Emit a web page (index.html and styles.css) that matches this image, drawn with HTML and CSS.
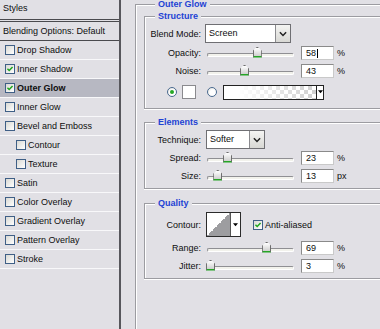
FILE: index.html
```html
<!doctype html>
<html lang="en">
<head>
<meta charset="UTF-8">
<title>Layer Style - Outer Glow</title>
<link rel="stylesheet" href="styles.css">
</head>
<body>
<div class="dialog">
  <!-- left: style list -->
  <div class="styles-list">
    <div class="list-head">Styles</div>
    <div class="list-row blend">Blending Options: Default</div>
    <div class="list-row"><span class="chk"></span>Drop Shadow</div>
    <div class="list-row"><span class="chk on"><svg viewBox="0 0 10 10"><path d="M1.8 4.6 L4 6.8 L8.2 2.4"/></svg></span>Inner Shadow</div>
    <div class="list-row sel"><span class="chk on"><svg viewBox="0 0 10 10"><path d="M1.8 4.6 L4 6.8 L8.2 2.4"/></svg></span>Outer Glow</div>
    <div class="list-row"><span class="chk"></span>Inner Glow</div>
    <div class="list-row"><span class="chk"></span>Bevel and Emboss</div>
    <div class="list-row sub"><span class="chk"></span>Contour</div>
    <div class="list-row sub"><span class="chk"></span>Texture</div>
    <div class="list-row"><span class="chk"></span>Satin</div>
    <div class="list-row"><span class="chk"></span>Color Overlay</div>
    <div class="list-row"><span class="chk"></span>Gradient Overlay</div>
    <div class="list-row"><span class="chk"></span>Pattern Overlay</div>
    <div class="list-row"><span class="chk"></span>Stroke</div>
  </div>

  <!-- right: settings -->
  <div class="panel">
    <div class="group outer">
      <div class="group-title">Outer Glow</div>

      <div class="group structure">
        <div class="group-title">Structure</div>
        <div class="field first">
          <label>Blend Mode:</label>
          <div class="select blend-sel"><span>Screen</span><b><svg viewBox="0 0 9 6"><path d="M1 1 L4.5 4.6 L8 1"/></svg></b></div>
        </div>
        <div class="field slide top1">
          <label>Opacity:</label>
          <div class="track"><i class="thumb" style="left:58%"></i></div>
          <div class="num">58<em class="caret"></em></div><span class="unit">%</span>
        </div>
        <div class="field slide">
          <label>Noise:</label>
          <div class="track"><i class="thumb" style="left:43%"></i></div>
          <div class="num">43</div><span class="unit">%</span>
        </div>
        <div class="colors">
          <span class="radio on"></span>
          <span class="swatch"></span>
          <span class="radio r2"></span>
          <div class="grad"><span class="grad-fill"></span><b><svg viewBox="0 0 6 4"><path d="M0 0 H6 L3 3.5 Z"/></svg></b></div>
        </div>
      </div>

      <div class="group elements">
        <div class="group-title">Elements</div>
        <div class="field first">
          <label class="wide">Technique:</label>
          <div class="select tech-sel"><span>Softer</span><b><svg viewBox="0 0 9 6"><path d="M1 1 L4.5 4.6 L8 1"/></svg></b></div>
        </div>
        <div class="field slide">
          <label>Spread:</label>
          <div class="track"><i class="thumb" style="left:23%"></i></div>
          <div class="num">23</div><span class="unit">%</span>
        </div>
        <div class="field slide">
          <label>Size:</label>
          <div class="track"><i class="thumb" style="left:11.5%"></i></div>
          <div class="num">13</div><span class="unit">px</span>
        </div>
      </div>

      <div class="group quality">
        <div class="group-title">Quality</div>
        <div class="field contour-row">
          <label class="wide">Contour:</label>
          <div class="contour"><span class="curve"></span><b><svg viewBox="0 0 6 4"><path d="M0 0 H6 L3 3.5 Z"/></svg></b></div>
          <span class="chk on aa"><svg viewBox="0 0 10 10"><path d="M1.8 4.6 L4 6.8 L8.2 2.4"/></svg></span>
          <span class="aa-text">Anti-aliased</span>
        </div>
        <div class="field slide top2">
          <label>Range:</label>
          <div class="track"><i class="thumb" style="left:69%"></i></div>
          <div class="num">69</div><span class="unit">%</span>
        </div>
        <div class="field slide">
          <label>Jitter:</label>
          <div class="track"><i class="thumb" style="left:3%"></i></div>
          <div class="num">3</div><span class="unit">%</span>
        </div>
      </div>
    </div>
  </div>
</div>
</body>
</html>
```

FILE: styles.css
```css
*{margin:0;padding:0;box-sizing:border-box;}
html,body{width:380px;height:329px;overflow:hidden;}
body{background:#e1e0e5;font:9px "Liberation Sans",Arial,sans-serif;color:#0e0e0e;}
.dialog{display:flex;height:329px;overflow:hidden;}

/* style list */
.styles-list{width:121px;flex:none;height:100%;border-right:2px solid #57575c;}
.list-head{height:22px;line-height:17px;padding-left:3px;border-bottom:3px double #4a4a4e;}
.list-row{height:19px;display:flex;align-items:center;padding-left:5px;border-bottom:1px solid #f8f8fa;white-space:nowrap;}
.list-row.blend{padding-left:3px;border-bottom-color:#4a4a4e;}
.list-row.sel{background:#b7b8c2;font-weight:bold;}
.list-row.sub{padding-left:16px;}
.chk{width:10px;height:10px;flex:none;margin-right:2px;border:1px solid #3f5f86;background:linear-gradient(135deg,#d9d9d4,#fff);display:flex;}
.chk svg{width:8px;height:8px;}
.chk path{fill:none;stroke:#1fa51f;stroke-width:1.9;}

/* right panel */
.panel{flex:1;min-width:0;height:100%;padding:4px 0 0 14px;overflow:hidden;}
.group{border:1px solid #9c9ca1;border-right:none;box-shadow:inset 1px 1px 0 #fff,0 1px 0 #fff;}
.group.outer{height:100%;padding-left:8px;border-bottom:none;box-shadow:inset 1px 1px 0 #fff;}
.group-title{display:table;height:12px;line-height:12px;margin:-7px 0 0 10px;padding:0 3px;background:#e1e0e5;color:#1e43d4;font-weight:bold;}
.outer>.group-title{margin-left:11px;}
.structure{margin-top:6px;padding-bottom:8px;}
.elements{margin-top:13px;padding-bottom:3px;}
.quality{margin-top:14px;padding-bottom:3px;}

.field{display:flex;align-items:center;height:18px;}
.field label{width:56px;flex:none;text-align:right;margin-right:4px;}
.field label.wide{margin-right:5px;}
.field.first{height:19px;margin-top:2px;}
.field.top1{margin-top:1px;}
.field.top2{margin-top:2px;}

.select{display:flex;height:19px;border:1px solid #6f6f73;background:#fff;}
.select span{flex:1;padding-left:3px;line-height:17px;}
.select b{width:15px;border-left:1px solid #8a8a8e;background:linear-gradient(#f4f4f2,#d8d8d4);display:flex;align-items:center;justify-content:center;}
.select svg{width:8px;height:6px;}
.select path{fill:none;stroke:#222;stroke-width:1.7;}
.blend-sel{width:86px;}
.tech-sel{width:59px;}

/* sliders */
.slide label{margin-right:6px;}
.track{position:relative;width:87px;height:4px;margin-top:3px;border:1px solid;border-color:#8f8f93 #fff #fff #8f8f93;border-radius:2px;background:#f2f2ec;}
.thumb{position:absolute;top:-7px;width:9px;height:11px;margin-left:-4.5px;background:linear-gradient(#fff,#cfcfcf);border:1px solid #6d6d6d;border-bottom:2px solid #25a525;clip-path:polygon(50% 0,100% 38%,100% 100%,0 100%,0 38%);}
.num{width:33px;height:14px;margin-left:7px;padding-left:4px;line-height:12px;border:1px solid;border-color:#8a8a8a #c9c9c9 #c9c9c9 #8a8a8a;background:#fff;display:flex;align-items:center;}
.caret{display:inline-block;width:1px;height:9px;margin-left:1px;background:#000;}
.unit{margin-left:3px;}

/* colour row */
.colors{display:flex;align-items:center;height:16px;margin-top:4px;padding-left:22px;}
.radio{width:10px;height:10px;flex:none;border:1px solid #4a6a90;border-radius:50%;background:radial-gradient(circle at 60% 60%,#fff 40%,#dcdcd6);display:flex;align-items:center;justify-content:center;}
.radio.on::after{content:"";width:4px;height:4px;border-radius:50%;background:#26a826;}
.swatch{width:14px;height:14px;margin-left:5px;border:1px solid #8a8a8e;background:#fff;}
.radio.r2{margin-left:11px;}
.grad{display:flex;width:101px;height:15px;margin-left:6px;border:1px solid #222;background:#fff;}
.grad-fill{flex:1;background:linear-gradient(to right,#fff 15%,rgba(255,255,255,0)),linear-gradient(45deg,#cfcfcf 25%,transparent 25%,transparent 75%,#cfcfcf 75%),linear-gradient(45deg,#cfcfcf 25%,#fff 25%,#fff 75%,#cfcfcf 75%);background-size:auto,8px 8px,8px 8px;background-position:0 0,0 0,4px 4px;}
.grad b{width:7px;border-left:1px solid #222;display:flex;align-items:center;justify-content:center;background:#fff;}
.grad svg,.contour svg{width:5px;height:4px;}

/* contour row */
.field.contour-row{height:25px;margin-top:3px;}
.contour{display:flex;width:35px;height:25px;border:1px solid #2b2b2b;background:#fff;}
.curve{width:24px;background:linear-gradient(to bottom right,#fff 50%,#9d9da0 50%);border-right:1px solid #555;}
.contour b{flex:1;display:flex;align-items:center;justify-content:center;}
.chk.aa{margin-left:12px;margin-right:2px;}
```
